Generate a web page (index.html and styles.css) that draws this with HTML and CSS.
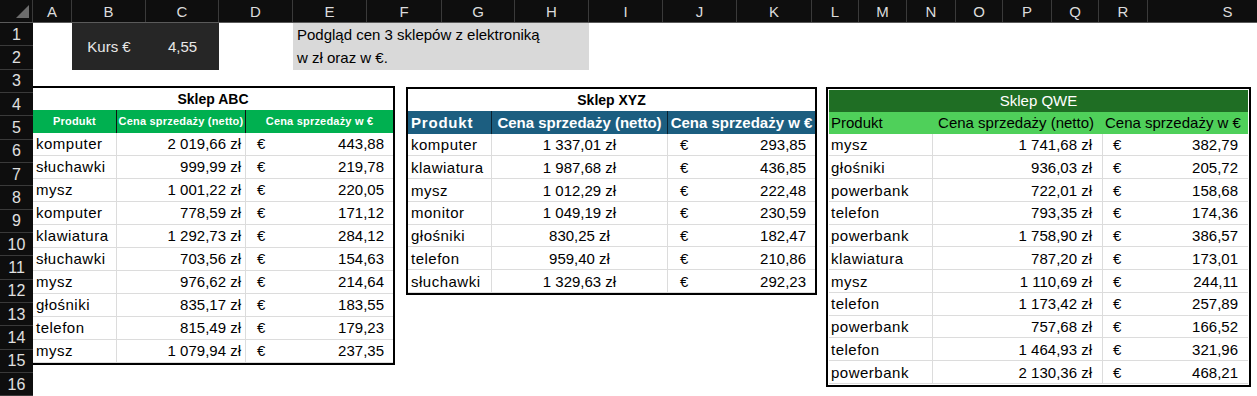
FILE: index.html
```html
<!DOCTYPE html>
<html lang="pl">
<head>
<meta charset="utf-8">
<title>Arkusz</title>
<link rel="stylesheet" href="styles.css">
</head>
<body>
<div class="colhead">
  <div class="corner"><span class="tri"></span></div>
  <div class="ch">A</div><div class="ch">B</div><div class="ch">C</div><div class="ch">D</div><div class="ch">E</div><div class="ch">F</div><div class="ch">G</div><div class="ch">H</div><div class="ch">I</div><div class="ch">J</div><div class="ch">K</div><div class="ch">L</div><div class="ch">M</div><div class="ch">N</div><div class="ch">O</div><div class="ch">P</div><div class="ch">Q</div><div class="ch">R</div><div class="ch">S</div>
</div>
<div class="main">
  <div class="rowhead">
    <div class="rh">1</div><div class="rh">2</div><div class="rh">3</div><div class="rh">4</div><div class="rh">5</div><div class="rh">6</div><div class="rh">7</div><div class="rh">8</div><div class="rh">9</div><div class="rh">10</div><div class="rh">11</div><div class="rh">12</div><div class="rh">13</div><div class="rh">14</div><div class="rh">15</div><div class="rh">16</div>
  </div>
  <div class="sheet">
    <div class="top">
      <div class="kurs"><span>Kurs €</span><span>4,55</span></div>
      <div class="note"><span>Podgląd cen 3 sklepów z elektroniką</span><span>w zł oraz w €.</span></div>
    </div>
    <div class="tables">
      <div class="tbl abc">
        <div class="title">Sklep ABC</div>
        <div class="hrow"><div class="h">Produkt</div><div class="h">Cena sprzedaży (netto)</div><div class="h">Cena sprzedaży w €</div></div>
        <div class="row"><div class="c">komputer</div><div class="c num">2 019,66 zł</div><div class="c eur"><span>€</span><span>443,88</span></div></div>
        <div class="row"><div class="c">słuchawki</div><div class="c num">999,99 zł</div><div class="c eur"><span>€</span><span>219,78</span></div></div>
        <div class="row"><div class="c">mysz</div><div class="c num">1 001,22 zł</div><div class="c eur"><span>€</span><span>220,05</span></div></div>
        <div class="row"><div class="c">komputer</div><div class="c num">778,59 zł</div><div class="c eur"><span>€</span><span>171,12</span></div></div>
        <div class="row"><div class="c">klawiatura</div><div class="c num">1 292,73 zł</div><div class="c eur"><span>€</span><span>284,12</span></div></div>
        <div class="row"><div class="c">słuchawki</div><div class="c num">703,56 zł</div><div class="c eur"><span>€</span><span>154,63</span></div></div>
        <div class="row"><div class="c">mysz</div><div class="c num">976,62 zł</div><div class="c eur"><span>€</span><span>214,64</span></div></div>
        <div class="row"><div class="c">głośniki</div><div class="c num">835,17 zł</div><div class="c eur"><span>€</span><span>183,55</span></div></div>
        <div class="row"><div class="c">telefon</div><div class="c num">815,49 zł</div><div class="c eur"><span>€</span><span>179,23</span></div></div>
        <div class="row"><div class="c">mysz</div><div class="c num">1 079,94 zł</div><div class="c eur"><span>€</span><span>237,35</span></div></div>
      </div>
      <div class="tbl xyz">
        <div class="title">Sklep XYZ</div>
        <div class="hrow"><div class="h">Produkt</div><div class="h">Cena sprzedaży (netto)</div><div class="h">Cena sprzedaży w €</div></div>
        <div class="row"><div class="c">komputer</div><div class="c num">1 337,01 zł</div><div class="c eur"><span>€</span><span>293,85</span></div></div>
        <div class="row"><div class="c">klawiatura</div><div class="c num">1 987,68 zł</div><div class="c eur"><span>€</span><span>436,85</span></div></div>
        <div class="row"><div class="c">mysz</div><div class="c num">1 012,29 zł</div><div class="c eur"><span>€</span><span>222,48</span></div></div>
        <div class="row"><div class="c">monitor</div><div class="c num">1 049,19 zł</div><div class="c eur"><span>€</span><span>230,59</span></div></div>
        <div class="row"><div class="c">głośniki</div><div class="c num">830,25 zł</div><div class="c eur"><span>€</span><span>182,47</span></div></div>
        <div class="row"><div class="c">telefon</div><div class="c num">959,40 zł</div><div class="c eur"><span>€</span><span>210,86</span></div></div>
        <div class="row"><div class="c">słuchawki</div><div class="c num">1 329,63 zł</div><div class="c eur"><span>€</span><span>292,23</span></div></div>
      </div>
      <div class="tbl qwe">
        <div class="title">Sklep QWE</div>
        <div class="hrow"><div class="h">Produkt</div><div class="h">Cena sprzedaży (netto)</div><div class="h">Cena sprzedaży w €</div></div>
        <div class="row"><div class="c">mysz</div><div class="c num">1 741,68 zł</div><div class="c eur"><span>€</span><span>382,79</span></div></div>
        <div class="row"><div class="c">głośniki</div><div class="c num">936,03 zł</div><div class="c eur"><span>€</span><span>205,72</span></div></div>
        <div class="row"><div class="c">powerbank</div><div class="c num">722,01 zł</div><div class="c eur"><span>€</span><span>158,68</span></div></div>
        <div class="row"><div class="c">telefon</div><div class="c num">793,35 zł</div><div class="c eur"><span>€</span><span>174,36</span></div></div>
        <div class="row"><div class="c">powerbank</div><div class="c num">1 758,90 zł</div><div class="c eur"><span>€</span><span>386,57</span></div></div>
        <div class="row"><div class="c">klawiatura</div><div class="c num">787,20 zł</div><div class="c eur"><span>€</span><span>173,01</span></div></div>
        <div class="row"><div class="c">mysz</div><div class="c num">1 110,69 zł</div><div class="c eur"><span>€</span><span>244,11</span></div></div>
        <div class="row"><div class="c">telefon</div><div class="c num">1 173,42 zł</div><div class="c eur"><span>€</span><span>257,89</span></div></div>
        <div class="row"><div class="c">powerbank</div><div class="c num">757,68 zł</div><div class="c eur"><span>€</span><span>166,52</span></div></div>
        <div class="row"><div class="c">telefon</div><div class="c num">1 464,93 zł</div><div class="c eur"><span>€</span><span>321,96</span></div></div>
        <div class="row"><div class="c">powerbank</div><div class="c num">2 130,36 zł</div><div class="c eur"><span>€</span><span>468,21</span></div></div>
      </div>
    </div>
  </div>
</div>
</body>
</html>
```
FILE: styles.css
```css
* { box-sizing: border-box; }
html, body { margin: 0; padding: 0; }
body {
  width: 1257px;
  height: 396px;
  overflow: hidden;
  background: #fff;
  font-family: "Liberation Sans", Arial, sans-serif;
  font-size: 15px;
  color: #000;
}
.colhead {
  display: grid;
  grid-template-columns: 33px 39px 74px 73px 74px 74px 75px 73px 74px 74px 74px 75px 47px 48px 49px 47px 49px 47px 49px 160px;
  height: 23px;
  background: #0e0e0e;
  border-bottom: 1px solid #5a5a5a;
}
.corner {
  border-right: 1px solid #3a3a3a;
  display: flex;
  align-items: flex-end;
  justify-content: flex-end;
  padding: 0 3px 4px 0;
}
.tri {
  width: 0;
  height: 0;
  border-left: 13px solid transparent;
  border-bottom: 13px solid #6c6c6c;
}
.ch {
  border-right: 1px solid #3a3a3a;
  color: #dcdcdc;
  display: flex;
  align-items: center;
  justify-content: center;
  font-size: 15px;
}
.main {
  display: grid;
  grid-template-columns: 33px 1fr;
}
.rowhead {
  background: #0e0e0e;
  display: grid;
  grid-auto-rows: 23.33px;
}
.rh {
  border-bottom: 1px solid #3a3a3a;
  color: #e0e0e0;
  display: flex;
  align-items: center;
  justify-content: center;
  font-size: 16px;
  padding-top: 1px;
}
.sheet {
  display: flex;
  flex-direction: column;
}
.top {
  display: grid;
  grid-template-columns: 39px 74px 73px 74px 74px 75px 73px 74px 74px;
  grid-template-rows: 23.33px 23.33px;
}
.kurs {
  grid-column: 2 / 4;
  grid-row: 1 / 3;
  background: #262626;
  color: #e8e8e8;
  display: grid;
  grid-template-columns: 74px 73px;
  align-items: center;
  justify-items: center;
  font-size: 15px;
}
.note {
  grid-column: 5 / 9;
  grid-row: 1 / 3;
  background: #d9d9d9;
  display: grid;
  grid-template-rows: 23.33px 23.33px;
  align-items: center;
  padding-left: 4px;
  font-size: 15px;
}
.tables {
  display: flex;
  align-items: flex-start;
  margin-top: 16px;
}
.tbl {
  border: 2px solid #000;
  background: #fff;
}
.title {
  height: 22px;
  display: flex;
  align-items: center;
  justify-content: center;
  font-weight: bold;
  font-size: 14px;
}
.hrow, .row {
  display: grid;
}
.hrow { height: 23px; }
.row {
  height: 22.75px;
  border-bottom: 1px solid #dcdcdc;
}
.h, .c {
  display: flex;
  align-items: center;
  white-space: nowrap;
  overflow: hidden;
}
.c { padding: 0 3px; font-size: 15px; letter-spacing: 0.5px; }
.row .c:nth-child(1), .row .c:nth-child(2) { border-right: 1px solid #dcdcdc; }
.c.num { letter-spacing: 0; }
.c.eur { justify-content: space-between; letter-spacing: 0; }

/* ABC */
.abc { width: 362px; border-left: 0; }
.abc .row { height: 23px; }
.abc .hrow, .abc .row { grid-template-columns: 84px 129px 147px; }
.abc .hrow { background: #00b050; }
.abc .h {
  justify-content: center;
  color: #fff;
  font-weight: bold;
  font-size: 11px;
  letter-spacing: 0.2px;
}
.abc .h:nth-child(1), .abc .h:nth-child(2) { border-right: 1px solid #111; }
.abc .num { justify-content: flex-end; padding-right: 4px; }
.abc .eur { padding: 0 9px 0 11px; }

/* XYZ */
.xyz { width: 411px; margin: 1px 0 0 11px; }
.xyz .hrow, .xyz .row { grid-template-columns: 84px 176px 147px; }
.xyz .hrow { background: #1c5e80; }
.xyz .h {
  justify-content: center;
  color: #fff;
  font-weight: bold;
  font-size: 15px;
}
.xyz .h:nth-child(1) { justify-content: flex-start; padding-left: 3px; letter-spacing: 0.8px; }
.xyz .h:nth-child(1), .xyz .h:nth-child(2) { border-right: 1px solid #0b2230; }
.xyz .num { justify-content: center; }
.xyz .eur { padding: 0 9px 0 12px; }

/* QWE */
.qwe { width: 425px; margin: 1px 0 0 9px; padding: 1px; }
.qwe .title {
  background: #1f6e24;
  color: #fff;
  font-weight: normal;
  font-size: 15px;
  height: 22px;
}
.qwe .hrow, .qwe .row { grid-template-columns: 104px 170px 145px; }
.qwe .hrow { background: #4fd05a; height: 22px; }
.qwe .h { font-size: 15px; padding: 0 2px; }
.qwe .h:nth-child(2) { justify-content: flex-end; padding-right: 9px; }
.qwe .h:nth-child(3) { justify-content: flex-start; padding-left: 2px; }
.qwe .c:nth-child(1) { padding-left: 2px; }
.qwe .num { justify-content: flex-end; padding-right: 10px; }
.qwe .eur { padding: 0 10px; }
```
